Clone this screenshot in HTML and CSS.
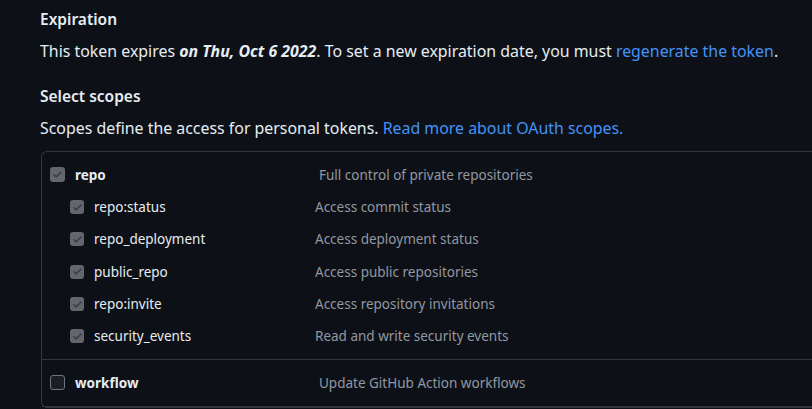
FILE: index.html
```html
<!DOCTYPE html>
<html>
<head>
<meta charset="utf-8">
<link rel="stylesheet" href="styles.css">
</head>
<body>
<main class="page">
  <h3 class="heading">Expiration</h3>
  <p class="note">This token expires <strong><em>on Thu, Oct 6 2022</em></strong>. To set a new expiration date, you must <a class="link" href="#">regenerate the token</a>.</p>

  <h3 class="heading heading-scopes">Select scopes</h3>
  <p class="note">Scopes define the access for personal tokens. <a class="link" href="#">Read more about OAuth scopes.</a></p>

  <div class="scopes">
    <div class="group">
      <div class="row parent">
        <span class="cb checked"><svg viewBox="0 0 16 16" width="11" height="11"><path d="M3 8.5l3 3 7-7" fill="none" stroke="#3b3f44" stroke-width="2.2" stroke-linecap="round" stroke-linejoin="round"/></svg></span>
        <span class="name">repo</span>
        <span class="desc">Full control of private repositories</span>
      </div>
      <div class="row child">
        <span class="cb checked"><svg viewBox="0 0 16 16" width="11" height="11"><path d="M3 8.5l3 3 7-7" fill="none" stroke="#3b3f44" stroke-width="2.2" stroke-linecap="round" stroke-linejoin="round"/></svg></span>
        <span class="name">repo:status</span>
        <span class="desc">Access commit status</span>
      </div>
      <div class="row child">
        <span class="cb checked"><svg viewBox="0 0 16 16" width="11" height="11"><path d="M3 8.5l3 3 7-7" fill="none" stroke="#3b3f44" stroke-width="2.2" stroke-linecap="round" stroke-linejoin="round"/></svg></span>
        <span class="name">repo_deployment</span>
        <span class="desc">Access deployment status</span>
      </div>
      <div class="row child">
        <span class="cb checked"><svg viewBox="0 0 16 16" width="11" height="11"><path d="M3 8.5l3 3 7-7" fill="none" stroke="#3b3f44" stroke-width="2.2" stroke-linecap="round" stroke-linejoin="round"/></svg></span>
        <span class="name">public_repo</span>
        <span class="desc">Access public repositories</span>
      </div>
      <div class="row child">
        <span class="cb checked"><svg viewBox="0 0 16 16" width="11" height="11"><path d="M3 8.5l3 3 7-7" fill="none" stroke="#3b3f44" stroke-width="2.2" stroke-linecap="round" stroke-linejoin="round"/></svg></span>
        <span class="name">repo:invite</span>
        <span class="desc">Access repository invitations</span>
      </div>
      <div class="row child">
        <span class="cb checked"><svg viewBox="0 0 16 16" width="11" height="11"><path d="M3 8.5l3 3 7-7" fill="none" stroke="#3b3f44" stroke-width="2.2" stroke-linecap="round" stroke-linejoin="round"/></svg></span>
        <span class="name">security_events</span>
        <span class="desc">Read and write security events</span>
      </div>
    </div>
    <div class="group group-single">
      <div class="row parent">
        <span class="cb"></span>
        <span class="name">workflow</span>
        <span class="desc">Update GitHub Action workflows</span>
      </div>
    </div>
  </div>
</main>
</body>
</html>
```

FILE: styles.css
```css
html, body {
  margin: 0;
  padding: 0;
  background: #0d1117;
}

body {
  font-family: "Noto Sans", "Open Sans", sans-serif;
  color: #e6edf3;
  overflow: hidden;
}

.page {
  padding: 7px 0 0 40px;
}

.heading {
  margin: 0;
  font-size: 15.5px;
  font-weight: 600;
  line-height: 24px;
  color: #e6edf3;
}

.heading-scopes {
  margin-top: 21px;
}

.note {
  margin: 8px 0 0;
  font-size: 15.9px;
  line-height: 24px;
  white-space: nowrap;
}

.note strong {
  font-weight: 700;
}

.link {
  color: #4493f8;
  text-decoration: none;
}

.scopes {
  margin-top: 11px;
  margin-left: 1px;
  width: 780px;
  border: 1px solid #30363d;
  border-right: none;
  border-radius: 6px 0 0 6px;
}

.group {
  padding: 6px 0 7px;
  border-bottom: 1px solid #30363d;
}

.group-single {
  padding: 6px 0 7px;
}

.row {
  display: flex;
  align-items: center;
  height: 32.3px;
  font-size: 13.5px;
}

.row.parent {
  height: 33px;
  padding-left: 8px;
}

.row.child {
  padding-left: 28px;
}

.cb {
  box-sizing: border-box;
  width: 14px;
  height: 14px;
  border-radius: 3px;
  border: 1.5px solid #6e7681;
  background: #1b1f25;
  display: flex;
  align-items: center;
  justify-content: center;
  flex: none;
}

.parent .cb {
  width: 15px;
  height: 15px;
}

.cb.checked {
  border: none;
  background: #63666a;
}

.name {
  margin-left: 10px;
  color: #e6edf3;
}

.parent .name {
  width: 244px;
  font-weight: 700;
}

.child .name {
  width: 221px;
}

.desc {
  color: #9198a1;
}
```
